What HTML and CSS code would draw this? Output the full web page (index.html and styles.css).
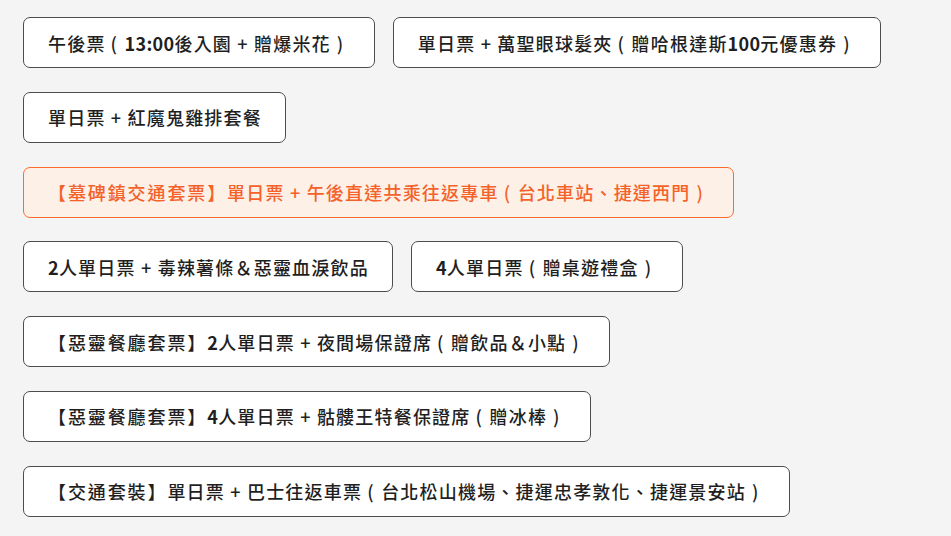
FILE: index.html
```html
<!DOCTYPE html>
<html lang="zh-Hant">
<head>
<meta charset="UTF-8">
<meta name="viewport" content="width=device-width, initial-scale=1.0">
<title>票種選擇</title>
<link rel="stylesheet" href="styles.css">
</head>
<body>

<div class="ticket-list">
    <button class="ticket">午後票<span class="paren open">(</span><span class="num">13:00</span>後入園 + 贈爆米花<span class="paren close">)</span></button>
    <button class="ticket">單日票 + 萬聖眼球髮夾<span class="paren open">(</span>贈哈根達斯<span class="num">100</span>元優惠券<span class="paren close">)</span></button>
    <button class="ticket">單日票 + 紅魔鬼雞排套餐</button>
    <button class="ticket active"><span class="tag">【墓碑鎮交通套票】</span>單日票 + 午後直達共乘往返專車<span class="paren open">(</span>台北車站、捷運西門<span class="paren close">)</span></button>
    <button class="ticket"><span class="num">2</span>人單日票 + 毒辣薯條＆惡靈血淚飲品</button>
    <button class="ticket"><span class="num">4</span>人單日票<span class="paren open">(</span>贈桌遊禮盒<span class="paren close">)</span></button>
    <button class="ticket"><span class="tag">【惡靈餐廳套票】</span><span class="num">2</span>人單日票 + 夜間場保證席<span class="paren open">(</span>贈飲品＆小點<span class="paren close">)</span></button>
    <button class="ticket"><span class="tag">【惡靈餐廳套票】</span><span class="num">4</span>人單日票 + 骷髏王特餐保證席<span class="paren open">(</span>贈冰棒<span class="paren close">)</span></button>
    <button class="ticket"><span class="tag">【交通套裝】</span>單日票 + 巴士往返車票<span class="paren open">(</span>台北松山機場、捷運忠孝敦化、捷運景安站<span class="paren close">)</span></button>
</div>

</body>
</html>
```

FILE: styles.css
```css
body {
    margin: 0;
    padding: 17px 23px;
    background-color: #f4f4f4;
    font-family: "Noto Sans CJK TC", sans-serif;
    color: #222222;
}
.ticket-list {
    display: flex;
    flex-wrap: wrap;
    gap: 23.8px 18px;
}
.ticket {
    height: 51px;
    padding: 0 23px 0 24px;
    background-color: #ffffff;
    border: 1px solid #4d4d4d;
    border-radius: 7px;
    font-family: inherit;
    font-size: 18px;
    font-weight: 500;
    letter-spacing: 1.2px;
    color: #1f1f1f;
    cursor: pointer;
    white-space: nowrap;
}
.ticket .tag {
    letter-spacing: 1.9px;
}
.ticket .num {
    font-weight: 600;
    letter-spacing: 0.3px;
}
.ticket .paren {
    display: inline-block;
    box-sizing: border-box;
    width: 20px;
    text-align: left;
}
.ticket .paren.open {
    width: 19px;
    padding-left: 5px;
}
.ticket .paren.close {
    padding-left: 6px;
}
.ticket.active {
    background-color: #fdf0e7;
    border-color: #ff6a2a;
    color: #f4622a;
}
```
